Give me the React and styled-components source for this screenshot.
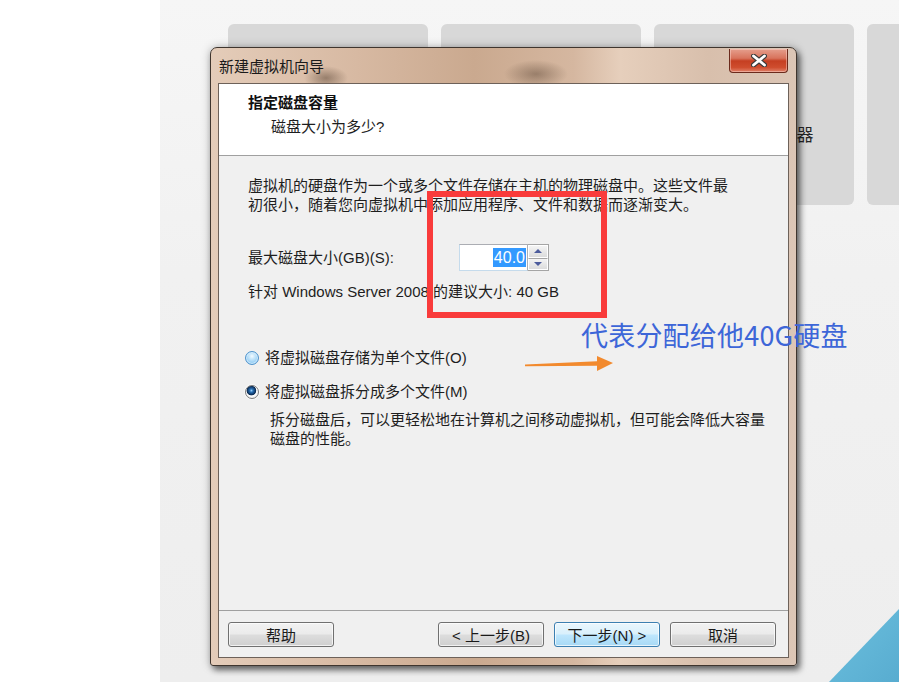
import React from "react";
import styled, { createGlobalStyle } from "styled-components";

const GlobalStyle = createGlobalStyle`
  html, body {
    margin: 0;
    padding: 0;
    background: #fff;
  }
  body {
    font-family: "Liberation Sans", "Noto Sans CJK SC", sans-serif;
    font-size: 15px;
    color: #1e1e1e;
  }
`;

// only the third card's caption peeks out from behind the dialog
const cards = [
  { id: "new" },
  { id: "open" },
  { id: "remote", label: "连接远程服务器" },
  { id: "cloud" },
];

const App = () => {
  return (
    <Page>
      <GlobalStyle />
      <SideBlank />
      <Workspace>
        <CardRow>
          {cards.map((card) => (
            <Card key={card.id}>
              <CardIcon />
              {card.label && <CardLabel>{card.label}</CardLabel>}
            </Card>
          ))}
        </CardRow>
        <Corner viewBox="0 0 70 73" width="70" height="73">
          <defs>
            <linearGradient id="cornerFill" x1="0" y1="0" x2="1" y2="1">
              <stop offset="0" stopColor="#6cc0de" />
              <stop offset="1" stopColor="#58acd0" />
            </linearGradient>
          </defs>
          <polygon points="0,73 70,0 70,73" fill="url(#cornerFill)" />
        </Corner>
      </Workspace>

      <Window>
        <TitleBar>
          <TitleText>新建虚拟机向导</TitleText>
          <CloseButton aria-label="关闭">
            <svg width="16" height="13" viewBox="0 0 16 13">
              <path
                d="M2.5 2 L13.5 11 M13.5 2 L2.5 11"
                stroke="#3b3b3b"
                strokeWidth="5"
                strokeLinecap="round"
              />
              <path
                d="M2.5 2 L13.5 11 M13.5 2 L2.5 11"
                stroke="#ffffff"
                strokeWidth="2.8"
                strokeLinecap="round"
              />
            </svg>
          </CloseButton>
        </TitleBar>

        <Client>
          <Header>
            <HeaderTitle>指定磁盘容量</HeaderTitle>
            <HeaderSub>磁盘大小为多少?</HeaderSub>
          </Header>

          <Body>
            <Paragraph>
              虚拟机的硬盘作为一个或多个文件存储在主机的物理磁盘中。这些文件最
              <br />
              初很小，随着您向虚拟机中添加应用程序、文件和数据而逐渐变大。
            </Paragraph>

            <SizeRow>
              <FieldLabel>最大磁盘大小(GB)(S):</FieldLabel>
              <Spinner>
                <SpinInput>
                  <Selected>40.0</Selected>
                </SpinInput>
                <SpinButtons>
                  <SpinButton>
                    <Arrow $up />
                  </SpinButton>
                  <SpinButton>
                    <Arrow />
                  </SpinButton>
                </SpinButtons>
              </Spinner>
            </SizeRow>

            <Hint>针对 Windows Server 2008 的建议大小: 40 GB</Hint>

            <RadioGroup>
              <RadioRow>
                <Radio />
                <span>将虚拟磁盘存储为单个文件(O)</span>
              </RadioRow>
              <RadioRow>
                <Radio $checked />
                <span>将虚拟磁盘拆分成多个文件(M)</span>
              </RadioRow>
              <RadioNote>
                拆分磁盘后，可以更轻松地在计算机之间移动虚拟机，但可能会降低大容量
                <br />
                磁盘的性能。
              </RadioNote>
            </RadioGroup>
          </Body>

          <Footer>
            <Button>帮助</Button>
            <NavGroup>
              <Button>&lt; 上一步(B)</Button>
              <Button $primary>下一步(N) &gt;</Button>
              <Button>取消</Button>
            </NavGroup>
          </Footer>
        </Client>
      </Window>

      <RedMark />
      <Note>代表分配给他40G硬盘</Note>
      <NoteArrow viewBox="0 0 92 20" width="92" height="20">
        <polygon
          points="1,10.6 73,7.2 73,2 89,9 73,17 73,11.8 1,12.2"
          fill="#f28a2e"
        />
      </NoteArrow>
    </Page>
  );
};

export default App;

const Page = styled.div`
  position: relative;
  display: flex;
  width: 899px;
  height: 682px;
  overflow: hidden;
  background: #fff;
`;

const SideBlank = styled.div`
  width: 160px;
  flex-shrink: 0;
  background: #ffffff;
`;

const Workspace = styled.div`
  position: relative;
  flex: 1;
  padding: 24px 0 0 68px;
  background: linear-gradient(180deg, #f6f6f6 0%, #f1f1f1 40%, #eeeeee 100%);
  overflow: hidden;
`;

const CardRow = styled.div`
  display: flex;
  gap: 13px;
`;

const Card = styled.div`
  flex: 0 0 200px;
  height: 181px;
  border-radius: 6px;
  background: #d8d8d8;
  display: flex;
  flex-direction: column;
  align-items: center;
  padding-top: 36px;
  box-sizing: border-box;
`;

const CardIcon = styled.div`
  width: 54px;
  height: 48px;
  border-radius: 6px;
  background: #5e5e5e;
`;

const CardLabel = styled.div`
  margin-top: 16px;
  font-family: "Noto Sans CJK SC", sans-serif;
  font-size: 17px;
  line-height: 20px;
  color: #262626;
  white-space: nowrap;
`;

const Corner = styled.svg`
  position: absolute;
  right: 0;
  bottom: 0;
  display: block;
`;

const Window = styled.div`
  position: absolute;
  left: 210px;
  top: 47px;
  width: 587px;
  height: 619px;
  box-sizing: border-box;
  display: flex;
  flex-direction: column;
  padding: 0 7px 7px;
  border: 1px solid #3f352e;
  border-radius: 7px 7px 3px 3px;
  background: linear-gradient(
    90deg,
    #e4ccb9 0%,
    #d7b9a2 25%,
    #caa98f 45%,
    #d5b7a0 62%,
    #e6cfbc 70%,
    #d8bfac 85%,
    #dcc6b6 100%
  );
  box-shadow: 3px 4px 6px rgba(0, 0, 0, 0.55), 0 0 10px rgba(0, 0, 0, 0.25);
`;

const TitleBar = styled.div`
  height: 35px;
  display: flex;
  align-items: center;
  padding-left: 1px;
  background: radial-gradient(
      ellipse 22px 12px at 108px 30px,
      rgba(70, 50, 35, 0.45),
      rgba(70, 50, 35, 0) 100%
    ),
    radial-gradient(
      ellipse 32px 14px at 318px 26px,
      rgba(70, 50, 35, 0.4),
      rgba(70, 50, 35, 0) 100%
    );
`;

const TitleText = styled.div`
  font-family: "Noto Sans CJK SC", sans-serif;
  font-size: 15px;
  color: #1a1a1a;
`;

const CloseButton = styled.div`
  align-self: flex-start;
  margin: 1px 1px 0 auto;
  width: 59px;
  height: 24px;
  box-sizing: border-box;
  display: flex;
  align-items: center;
  justify-content: center;
  border: 1px solid #6b2a1c;
  border-top: none;
  border-radius: 0 0 4px 4px;
  background: linear-gradient(
    180deg,
    #e59f8d 0%,
    #d8735c 40%,
    #c53f22 52%,
    #cf4d2e 80%,
    #e0826a 100%
  );
  box-shadow: inset 0 0 0 1px rgba(255, 220, 210, 0.45);
`;

const Client = styled.div`
  flex: 1;
  display: flex;
  flex-direction: column;
  border: 1px solid #6d6159;
  background: #f0f0f0;
`;

const Header = styled.div`
  height: 72px;
  box-sizing: border-box;
  padding: 9px 0 0 29px;
  background: #ffffff;
  border-bottom: 1px solid #a0a0a0;
`;

const HeaderTitle = styled.div`
  font-weight: bold;
  line-height: 19px;
  color: #111;
`;

const HeaderSub = styled.div`
  margin-top: 5px;
  padding-left: 23px;
  line-height: 19px;
`;

const Body = styled.div`
  flex: 1;
  padding: 20px 0 0 29px;
  line-height: 19px;
`;

const Paragraph = styled.div`
  white-space: nowrap;
`;

const SizeRow = styled.div`
  display: flex;
  align-items: center;
  margin-top: 30px;
`;

const FieldLabel = styled.div`
  width: 211px;
  flex-shrink: 0;
`;

const Spinner = styled.div`
  display: flex;
  height: 27px;
`;

const SpinInput = styled.div`
  width: 69px;
  box-sizing: border-box;
  display: flex;
  align-items: center;
  justify-content: flex-end;
  padding-right: 1px;
  background: #fff;
  border: 1px solid #abadb3;
  border-left-color: #c5dbec;
  border-bottom-color: #c5dbec;
`;

const Selected = styled.span`
  background: #3399ff;
  color: #fff;
  font-size: 16px;
  line-height: 19px;
  padding: 0 1px;
`;

const SpinButtons = styled.div`
  display: flex;
  flex-direction: column;
  width: 20px;
  border: 1px solid #a5a5a5;
  border-left: none;
`;

const SpinButton = styled.div`
  flex: 1;
  display: flex;
  align-items: center;
  justify-content: center;
  border: 1px solid #fff;
  background: linear-gradient(180deg, #f4f4f4, #dcdcdc);
  & + & {
    border-top: 1px solid #a5a5a5;
  }
`;

const Arrow = styled.span`
  width: 0;
  height: 0;
  border-left: 4px solid transparent;
  border-right: 4px solid transparent;
  ${(p) =>
    p.$up
      ? "border-bottom: 4px solid #4d5c9c;"
      : "border-top: 4px solid #4d5c9c;"}
`;

const Hint = styled.div`
  margin-top: 11px;
`;

const RadioGroup = styled.div`
  margin-top: 47px;
  display: flex;
  flex-direction: column;
  gap: 15px;
`;

const RadioRow = styled.div`
  display: flex;
  align-items: center;
  gap: 6px;
  margin-left: -3px;
`;

const Radio = styled.span`
  width: 14px;
  height: 14px;
  box-sizing: border-box;
  border-radius: 50%;
  border: 1px solid ${(p) => (p.$checked ? "#7c7c7c" : "#4f93cc")};
  background: ${(p) =>
    p.$checked
      ? "radial-gradient(circle at 45% 38%, #9fd3f7 0, #2a72b8 1.6px, #0a2a52 4.4px, #ffffff 5.2px, #dcdcdc 100%)"
      : "radial-gradient(circle at 50% 35%, #f4fbff 0, #cde9fb 25%, #98cff4 65%, #6fb6ea 100%)"};
  box-shadow: ${(p) =>
    p.$checked
      ? "0 0 0 1px rgba(255, 255, 255, 0.5)"
      : "inset 0 0 0 1px rgba(230, 245, 255, 0.7)"};
`;

const RadioNote = styled.div`
  margin-top: -6px;
  padding-left: 22px;
`;

const Footer = styled.div`
  height: 47px;
  box-sizing: border-box;
  display: flex;
  align-items: flex-start;
  padding: 11px 12px 0 9px;
  border-top: 1px solid #a0a0a0;
`;

const NavGroup = styled.div`
  display: flex;
  gap: 10px;
  margin-left: auto;
`;

const Button = styled.div`
  width: 106px;
  height: 25px;
  box-sizing: border-box;
  display: flex;
  align-items: center;
  justify-content: center;
  border-radius: 3px;
  border: 1px solid ${(p) => (p.$primary ? "#3c7fb1" : "#707070")};
  background: ${(p) =>
    p.$primary
      ? "linear-gradient(180deg, #eaf6fd 0%, #d9f0fc 48%, #bee6fd 52%, #a7d9f5 100%)"
      : "linear-gradient(180deg, #f2f2f2 0%, #ebebeb 48%, #dddddd 52%, #cfcfcf 100%)"};
  box-shadow: inset 0 0 0 1px rgba(255, 255, 255, 0.7);
  color: #1a1a1a;
  white-space: nowrap;
`;

const RedMark = styled.div`
  position: absolute;
  left: 427px;
  top: 191px;
  width: 180px;
  height: 127px;
  box-sizing: border-box;
  border: 6px solid #f93b3b;
`;

const Note = styled.div`
  position: absolute;
  left: 581px;
  top: 319px;
  font-family: "Noto Sans CJK SC", sans-serif;
  font-size: 27px;
  line-height: 32px;
  letter-spacing: 0.2px;
  color: #3d66d8;
  white-space: nowrap;
`;

const NoteArrow = styled.svg`
  position: absolute;
  left: 524px;
  top: 354px;
  display: block;
`;
